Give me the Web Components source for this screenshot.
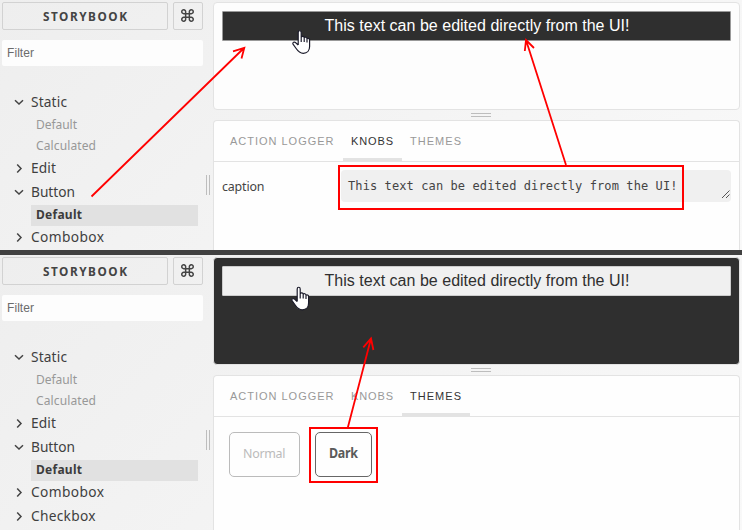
<!DOCTYPE html>
<html lang="en">
<head>
<meta charset="utf-8">
<title>Storybook</title>
<style>
html,body{margin:0;height:530px;overflow:hidden}
body{position:relative;font-family:"Noto Sans","Open Sans",sans-serif;color:#444;background:#414141;display:flex;flex-direction:column;gap:5px}
mark-layer{position:absolute;left:0;top:0}
</style>
</head>
<body>
<sb-screen style="height:250px" mode="knobs"></sb-screen>
<sb-screen style="height:275px" mode="themes"></sb-screen>
<mark-layer></mark-layer>
<script>
// Text run spread over a given width: optional horizontal condensing (sx), then letter spacing.
class FitText extends HTMLElement{
  constructor(){super();this.attachShadow({mode:'open'}).innerHTML=`<style>:host{display:inline-block;white-space:pre}span{display:inline-block;transform-origin:0 50%}</style><span><slot></slot></span>`;}
  connectedCallback(){
    const s=this.shadowRoot.querySelector('span'),w=+this.getAttribute('w'),k=+(this.getAttribute('sx')||1);
    const fit=()=>{if(!w||!this.textContent)return;s.style.transform='none';s.style.letterSpacing='0px';const n=s.getBoundingClientRect().width;
      if(n)s.style.letterSpacing=((w/k-n)/(this.textContent.length-1))+'px';
      if(k!==1){s.style.transform=`scaleX(${k})`;this.style.width=w+'px';}};
    fit();requestAnimationFrame(fit);
  }
}
class SbHeader extends HTMLElement{
  constructor(){super();this.attachShadow({mode:'open'}).innerHTML=`<style>
:host{display:flex;gap:5px;height:28px}
div{box-sizing:border-box;border:1px solid #d2d2d2;border-radius:2px;display:flex;align-items:center;justify-content:center;color:#444}
.t{width:166px;font-size:12.4px;font-weight:700;padding-top:1px}
.k{width:30px;padding:0 1px 1px 0}
</style><div class="t"><fit-text w="84" sx="0.95">STORYBOOK</fit-text></div>
<div class="k"><svg width="13" height="13" viewBox="0 0 14 14" fill="none" stroke="#444" stroke-width="1.6"><path d="M5 5V3.1A2.1 2.1 0 1 0 2.9 5H11.1A2.1 2.1 0 1 0 9 3.1V10.9A2.1 2.1 0 1 0 11.1 9H2.9A2.1 2.1 0 1 0 5 10.9Z"/></svg></div>`;}
}
class SbFilter extends HTMLElement{
  constructor(){super();this.attachShadow({mode:'open'}).innerHTML=`<style>
:host{display:flex;align-items:center;height:26px;background:#fdfdfd;border-radius:2px;margin-top:10px;padding:0 5px 1px;box-sizing:border-box;font:12px "Liberation Sans",sans-serif;color:#6b6b6b}
</style><fit-text w="27"><slot></slot></fit-text>`;
    this.shadowRoot.querySelector('fit-text').textContent='Filter';}
}
class SbGroup extends HTMLElement{
  connectedCallback(){const open=this.hasAttribute('open');
    this.attachShadow({mode:'open'}).innerHTML=`<style>
:host{display:block}
.r{height:24px;display:flex;align-items:center;font-size:14.6px;color:#3f3f3f}
svg{margin:0 7px 2px 12px;flex:none}
fit-text{line-height:20px;margin-bottom:4px}
</style><div class="r"><svg width="10" height="10" viewBox="0 0 10 10" fill="none" stroke="#444" stroke-width="1.5"><path d="${open?'M1 3.2L5 7L9 3.2':'M3.2 1.5L7 5.5L3.2 9.5'}"/></svg><fit-text w="${this.getAttribute('w')}" sx="0.94">${this.getAttribute('name')}</fit-text></div><slot></slot>`;}
}
class SbStory extends HTMLElement{
  connectedCallback(){
    this.attachShadow({mode:'open'}).innerHTML=`<style>
:host{display:flex;align-items:center;height:21px;margin:0 5px 0 29px;padding-left:5px;font-size:12.8px;line-height:17px;color:#989898;padding-bottom:2px;box-sizing:border-box}
:host([selected]){background:#e1e1e1;color:#3c3c3c;font-weight:700}
</style><fit-text w="${this.getAttribute('w')}" sx="0.94">${this.getAttribute('name')}</fit-text>`;}
}
class SbGrip extends HTMLElement{
  constructor(){super();this.attachShadow({mode:'open'}).innerHTML=`<style>
:host{display:block;box-sizing:border-box;width:4px;height:20px;border:solid #bdbdbd;border-width:0 1px}
:host([flat]){width:20px;height:4px;border-width:1px 0}
</style>`;}
}
class SbTabs extends HTMLElement{
  connectedCallback(){const a=this.getAttribute('active');
    const t=[['ACTION LOGGER',121,103.5],['KNOBS',59,42],['THEMES',68,51]];
    this.attachShadow({mode:'open'}).innerHTML=`<style>
:host{display:flex;height:41px;box-sizing:border-box;border-bottom:1px solid #e3e3e3;padding-left:8px;font:11px "Liberation Sans",sans-serif;color:#999}
div{box-sizing:border-box;padding:14px 0 0 8px;border-bottom:3px solid transparent}
.on{border-color:#e3e3e3;color:#333}
</style>`+t.map(x=>`<div style="width:${x[1]}px" class="${x[0]===a?'on':''}"><fit-text w="${x[2]}">${x[0]}</fit-text></div>`).join('');}
}
class SbKnob extends HTMLElement{
  constructor(){super();this.attachShadow({mode:'open'}).innerHTML=`<style>
:host{display:flex;padding:8px 8px 0}
.l{width:119px;font-size:13.2px;line-height:32px;color:#444}
.f{flex:1;height:32px;background:#f0f0f0;border-radius:4px;display:flex;justify-content:space-between;align-items:center;padding-left:7px;font:12px "DejaVu Sans Mono",monospace;color:#444}
svg{align-self:flex-end;margin:0 0 3px}
</style><div class="l"><fit-text w="42.5" sx="0.94">caption</fit-text></div><div class="f"><fit-text w="329.5">This text can be edited directly from the UI!</fit-text><svg width="10" height="10" viewBox="0 0 10 10" stroke="#555" fill="none" stroke-width="1"><path d="M1 9L8.5 1.5M5 9L8.5 5.5"/></svg></div>`;}
}
class SbThemes extends HTMLElement{
  constructor(){super();this.attachShadow({mode:'open'}).innerHTML=`<style>
:host{display:flex;gap:15px;padding:15px 15px 0}
div{box-sizing:border-box;height:45px;border:1px solid #bbb;border-radius:5px;display:flex;align-items:center;justify-content:center;font-size:13.4px;padding-bottom:3px;color:#bbb;width:71px}
.on{width:57px;border-color:#666;color:#5a5a5a;font-weight:700}
</style><div><fit-text w="42.5" sx="0.93">Normal</fit-text></div><div class="on"><fit-text w="29" sx="0.93">Dark</fit-text></div>`;}
}
class SbScreen extends HTMLElement{
  connectedCallback(){const knobs=this.getAttribute('mode')==='knobs';
    this.attachShadow({mode:'open'}).innerHTML=`<style>
:host{display:flex;overflow:hidden;background:linear-gradient(135deg,#eee,#f9f9f9)}
.side{width:201px;padding:2px 0 0 2px;flex:none}
nav{margin-top:25px}
.v{width:10px;flex:none;padding:175px 0 0 3px;box-sizing:border-box}
.main{width:527px;padding-top:2px;display:flex;flex-direction:column}
.pv{box-sizing:border-box;height:108px;flex:none;border:1px solid #e3e3e3;border-radius:4px;background:${knobs?'#fdfdfd':'#2f2f2f'};padding:8px}
.b{box-sizing:border-box;height:30px;border:1px solid ${knobs?'#999':'#ccc'};border-radius:1px;background:${knobs?'#2f2f2f':'#f0f0f0'};color:${knobs?'#fff':'#2f2f2f'};font:16px/27px "Liberation Sans",sans-serif;text-align:center;padding-left:1px}
.h{height:10px;flex:none;display:flex;justify-content:center;padding:3px 0 0 8px;box-sizing:border-box}
.lo{flex:1;border:1px solid #e3e3e3;border-bottom:0;border-radius:4px 4px 0 0;background:#fefefe}
</style>
<div class="side"><sb-header></sb-header><sb-filter></sb-filter><nav>
<sb-group open name="Static" w="36"><sb-story name="Default" w="41"></sb-story><sb-story name="Calculated" w="60"></sb-story></sb-group>
<sb-group name="Edit" w="25"></sb-group>
<sb-group open name="Button" w="44"><sb-story selected name="Default" w="46"></sb-story></sb-group>
<sb-group name="Combobox" w="73"></sb-group>${knobs?'':'<sb-group name="Checkbox" w="64.5"></sb-group>'}</nav></div>
<div class="v"><sb-grip></sb-grip></div>
<div class="main"><div class="pv"><div class="b"><fit-text w="305">This text can be edited directly from the UI!</fit-text></div></div>
<div class="h"><sb-grip flat></sb-grip></div>
<div class="lo"><sb-tabs active="${knobs?'KNOBS':'THEMES'}"></sb-tabs>${knobs?'<sb-knob></sb-knob>':'<sb-themes></sb-themes>'}</div></div>`;}
}
// Red annotations and mouse pointers over both screens.
class MarkLayer extends HTMLElement{
  constructor(){super();this.attachShadow({mode:'open'}).innerHTML=`<style>:host{display:block;width:742px;height:530px}svg{display:block}</style>
<svg width="742" height="530" viewBox="0 0 742 530" fill="none">
<defs><path id="hand" d="M6.2 15V2.4C6.2 .2 9.2 .2 9.2 2.4V7.2C9.8 6 12 6.2 12.2 7.7C13 6.8 14.8 7.2 15 8.7C16 8 17.6 8.6 17.6 10.2V16.5C17.6 20.5 15.2 23.3 11.3 23.3C7.2 23.3 5.6 20.7 3.8 18L1 14.2C.1 12.5 2.4 11.3 3.7 12.7L6.2 15M9.2 7V12M12.2 8V12M15 9V12.5" fill="#fff" stroke="#1b1b2b" stroke-width="1.2" stroke-linejoin="round"/></defs>
<use href="#hand" x="292" y="30"/><use href="#hand" x="291" y="286.5"/>
<g stroke="#f00" stroke-width="2"><rect x="339" y="166" width="344" height="43"/><rect x="310" y="428" width="67" height="54"/>
<path stroke-width="1.8" d="M91.5 196.5L244 48M233 51.3L244.3 47.8L241.5 58.5M566 165L526 40M524.8 51L526 40L534 48M347.7 428L371 338.5M363.3 347.3L371 338.5L373.4 350"/></g></svg>`;}
}
for(const [n,c] of [['fit-text',FitText],['sb-header',SbHeader],['sb-filter',SbFilter],['sb-group',SbGroup],['sb-story',SbStory],['sb-grip',SbGrip],['sb-tabs',SbTabs],['sb-knob',SbKnob],['sb-themes',SbThemes],['sb-screen',SbScreen],['mark-layer',MarkLayer]])customElements.define(n,c);
</script>
</body>
</html>
